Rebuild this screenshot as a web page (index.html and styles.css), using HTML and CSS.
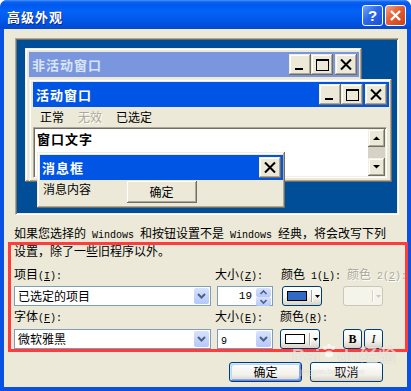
FILE: index.html
```html
<!DOCTYPE html>
<html lang="zh-CN">
<head>
    <meta charset="UTF-8">
    <title>高级外观</title>
    <link rel="stylesheet" href="styles.css">
</head>
<body>
    <div class="window">
        <div class="titlebar">
            <span class="title">高级外观</span>
            <div class="tb-btns">
                <span class="tb-btn help">?</span>
                <span class="tb-btn close">
                    <svg width="19" height="19" viewBox="0 0 19 19"><path d="M5 5 L14 14 M14 5 L5 14" stroke="#fff" stroke-width="2.4" fill="none"/></svg>
                </span>
            </div>
        </div>

        <div class="client">
            <!-- 预览 -->
            <div class="preview">
                <div class="win inactive">
                    <div class="cap">
                        <span class="cap-title">非活动窗口</span>
                        <span class="cbtn"><svg width="22" height="21"><rect x="6" y="14" width="8" height="2"/></svg></span>
                        <span class="cbtn"><svg width="22" height="21"><rect x="5" y="5" width="13" height="2"/><rect x="5.5" y="5.5" width="12" height="11" fill="none" stroke="#000"/></svg></span>
                        <span class="cbtn gap"><svg width="22" height="21"><path d="M6 5.5 L16 15.5 M16 5.5 L6 15.5" stroke="#000" stroke-width="2"/></svg></span>
                    </div>
                </div>

                <div class="win active">
                    <div class="cap">
                        <span class="cap-title">活动窗口</span>
                        <span class="cbtn"><svg width="22" height="21"><rect x="6" y="14" width="8" height="2"/></svg></span>
                        <span class="cbtn"><svg width="22" height="21"><rect x="5" y="5" width="13" height="2"/><rect x="5.5" y="5.5" width="12" height="11" fill="none" stroke="#000"/></svg></span>
                        <span class="cbtn gap"><svg width="22" height="21"><path d="M6 5.5 L16 15.5 M16 5.5 L6 15.5" stroke="#000" stroke-width="2"/></svg></span>
                    </div>
                    <div class="menu">
                        <span>正常</span>
                        <span class="dis">无效</span>
                        <span>已选定</span>
                    </div>
                    <div class="txt">
                        <div class="txt-body">窗口文字</div>
                        <div class="scroll">
                            <span class="sbtn"><svg width="17" height="18"><polygon points="5,11 12,11 8.5,7.5"/></svg></span>
                            <span class="track"></span>
                            <span class="sbtn"><svg width="17" height="18"><polygon points="5,7 12,7 8.5,10.5"/></svg></span>
                        </div>
                    </div>
                </div>

                <div class="win msgbox">
                    <div class="cap">
                        <span class="cap-title">消息框</span>
                        <span class="cbtn"><svg width="22" height="21"><path d="M6 5.5 L16 15.5 M16 5.5 L6 15.5" stroke="#000" stroke-width="2"/></svg></span>
                    </div>
                    <div class="msgbody">
                        <span class="msgtext">消息内容</span>
                        <span class="msgbtn">确定</span>
                    </div>
                </div>
            </div>

            <p class="desc">如果您选择的<span class="en"> Windows </span>和按钮设置不是<span class="en"> Windows </span>经典，将会改写下列<br>设置，除了一些旧程序以外。</p>

            <!-- 项目设置 -->
            <div class="props">
                <span class="lbl">项目<span class="en">(<u>I</u>):</span></span>
                <span class="lbl">大小<span class="en">(<u>Z</u>):</span></span>
                <span class="lbl c3">颜色<span class="en"> 1(<u>L</u>):</span></span>
                <span class="lbl c4 off">颜色<span class="en"> 2(<u>2</u>):</span></span>

                <div class="combo wide">
                    <span class="combo-text">已选定的项目</span>
                    <span class="drop"><svg width="15" height="16"><polyline points="4,6 7.5,9.5 11,6" fill="none" stroke="#4d6185" stroke-width="2"/></svg></span>
                </div>
                <div class="combo small">
                    <span class="combo-text num">19</span>
                    <span class="spinbtns">
                        <span><svg width="15" height="9"><polyline points="4.5,6 7.5,3 10.5,6" fill="none" stroke="#4d6185" stroke-width="1.6"/></svg></span>
                        <span><svg width="15" height="9"><polyline points="4.5,3 7.5,6 10.5,3" fill="none" stroke="#4d6185" stroke-width="1.6"/></svg></span>
                    </span>
                </div>
                <div class="colorpick shift">
                    <span class="swatch"></span>
                    <span class="sep"></span>
                    <svg width="5" height="3"><polygon points="0,0 5,0 2.5,3"/></svg>
                </div>
                <div class="colorpick disabled">
                    <span class="swatch"></span>
                    <span class="sep"></span>
                    <svg width="5" height="3"><polygon points="0,0 5,0 2.5,3" fill="#c9c7ba"/></svg>
                </div>

                <span class="lbl low">字体<span class="en">(<u>F</u>):</span></span>
                <span class="lbl low">大小<span class="en">(<u>E</u>):</span></span>
                <span class="lbl low">颜色<span class="en">(<u>R</u>):</span></span>
                <span></span>

                <div class="combo wide">
                    <span class="combo-text">微软雅黑</span>
                    <span class="drop"><svg width="15" height="16"><polyline points="4,6 7.5,9.5 11,6" fill="none" stroke="#4d6185" stroke-width="2"/></svg></span>
                </div>
                <div class="combo small">
                    <span class="combo-text"><span class="en">9</span></span>
                    <span class="drop"><svg width="15" height="16"><polyline points="4,6 7.5,9.5 11,6" fill="none" stroke="#4d6185" stroke-width="2"/></svg></span>
                </div>
                <div class="colorpick">
                    <span class="swatch white"></span>
                    <span class="sep"></span>
                    <svg width="5" height="3"><polygon points="0,0 5,0 2.5,3"/></svg>
                </div>
                <div class="fmt">
                    <span class="fbtn bold">B</span>
                    <span class="fbtn ital">I</span>
                </div>
            </div>

            <div class="actions">
                <span class="btn default">确定</span>
                <span class="btn">取消</span>
            </div>
        </div>

        <div class="mark"></div>
        <div class="watermark">
            <span class="wm-big">Bai<svg width="16" height="16"><g fill="#fff"><circle cx="4" cy="5" r="2"/><circle cx="8" cy="3" r="2"/><circle cx="12" cy="5" r="2"/><ellipse cx="8" cy="11" rx="4" ry="3.5"/></g></svg>du经验</span>
            <span class="wm-url">jingyan.baidu.com</span>
        </div>
    </div>
</body>
</html>
```

FILE: styles.css
```css
* {box-sizing: border-box;}
body {margin: 0; background: #fff; font-family: "Noto Sans CJK SC", "Liberation Sans", sans-serif; font-size: 12px; color: #000;}
.en {font-family: "Liberation Mono", monospace; font-size: 10px;}
u {text-underline-offset: 1px;}

/* 窗口外框 */
.window {position: relative; width: 411px; height: 391px; padding: 0 4px 4px; background: #0a50e2; border-radius: 7px 7px 0 0; overflow: hidden;}
.titlebar {height: 29px; margin: 0 -4px; padding: 0 5px 0 7px; display: flex; align-items: center; justify-content: space-between;
    background: linear-gradient(#4a93f7 0, #0a60f0 2px, #0058ee 5px, #0363f6 11px, #0058e9 20px, #004fd9 26px, #0a48cc 29px); border-radius: 7px 7px 0 0;}
.title {color: #fff; font-weight: bold; font-size: 13px; letter-spacing: 1px; padding-top: 3px; text-shadow: 1px 1px #0c2591;}
.tb-btns {display: flex; gap: 2px; padding-top: 1px;}
.tb-btn {width: 21px; height: 21px; border: 1px solid #fff; border-radius: 3px; display: flex; align-items: center; justify-content: center;}
.help {background: linear-gradient(135deg, #78a6fa, #2c68ea 45%, #1b4fd6); color: #fff; font: bold 15px "Liberation Sans", sans-serif;}
.close {background: linear-gradient(135deg, #f4a283, #e35f33 45%, #c7411b);}

.client {height: 358px; padding-top: 9px; background: #ece9d8;}

/* 预览区域 */
.preview {position: relative; margin-left: 11px; width: 384px; height: 177px; background: #004e98;
    border: 1px solid; border-color: #aca899 #fff #fff #aca899; box-shadow: inset 1px 1px #716f64, inset -1px -1px #f1efe2;}
.win {position: absolute; overflow: hidden; background: #ece9d8;
    box-shadow: inset -1px -1px #716f64, inset 1px 1px #f1efe2, inset -2px -2px #aca899, inset 2px 2px #fff;}
.inactive {left: 9px; top: 9px; width: 337px; height: 134px; padding: 4px 3px 0 4px;}
.active {left: 13px; top: 40px; width: 363px; height: 103px; padding: 3px 3px 0 4px;}
.msgbox {left: 21px; top: 113px; width: 248px; height: 56px; padding: 3px 2px 0 3px;}

.cap {height: 25px; display: flex; align-items: center; padding: 0 2px 0 3px; background: #0055e5; color: #fff; font-weight: bold; font-size: 13px; letter-spacing: 1px;}
.inactive .cap {background: #7a96df; color: #d8e4f8;}
.msgbox .cap {padding-left: 2px;}
.cap-title {flex: 1; line-height: 16px;}
.cbtn {display: block; width: 22px; height: 21px; background: #ece9d8;
    box-shadow: inset -1px -1px #716f64, inset 1px 1px #f1efe2, inset -2px -2px #aca899, inset 2px 2px #fff;}
.cbtn svg {display: block;}
.cbtn.gap {margin-left: 2px;}

.menu {height: 20px; display: flex; align-items: center; gap: 14px; padding-left: 7px; line-height: 20px;}
.menu .dis {color: #aca899; text-shadow: 1px 1px #fff;}

.txt {width: 354px; height: 51px; display: flex; padding: 1px; background: #fff;
    border: 1px solid; border-color: #aca899 #fff #fff #aca899; box-shadow: inset 1px 1px #716f64, inset -1px -1px #f1efe2;}
.txt-body {flex: 1; padding: 1px 0 0 2px; font-weight: bold; font-size: 13px; letter-spacing: 1px; line-height: 17px;}
.scroll {width: 17px; display: flex; flex-direction: column;}
.sbtn {display: block; height: 18px; background: #ece9d8;
    box-shadow: inset -1px -1px #716f64, inset 1px 1px #f1efe2, inset -2px -2px #aca899, inset 2px 2px #fff;}
.sbtn svg {display: block;}
.track {flex: 1; background: #d6d2c6;}

.msgbody {display: grid; grid-template-columns: 1fr 70px 1fr; height: 28px;}
.msgtext {padding-left: 3px; line-height: 18px;}
.msgbtn {height: 22px; margin-top: 1px; text-align: center; line-height: 22px; background: #ece9d8;
    box-shadow: inset -1px -1px #716f64, inset 1px 1px #fff, inset -2px -2px #aca899;}

/* 说明文字 */
.desc {margin: 10px 0 0 10px; line-height: 15px;}

/* 项目设置 */
.props {display: grid; grid-template-columns: 201px 65px 63px 40px; grid-template-rows: 19px 20px 23px 20px; margin: 9px 0 0 10px;}
.lbl {line-height: 14px; white-space: nowrap;}
.lbl.c3 {margin-left: 1px;}
.lbl.c4 {margin-left: 4px;}
.lbl.off {color: #aca899; text-shadow: 1px 1px #fff;}
.lbl.low {align-self: end; margin-bottom: 3px;}

.combo {display: flex; height: 20px; border: 1px solid #7f9db9; background: #fff;}
.combo.wide {width: 197px;}
.combo.small {width: 56px; margin-left: 2px;}
.combo-text {flex: 1; padding-left: 3px; line-height: 18px; white-space: nowrap;}
.combo-text.num {text-align: right; padding-right: 3px; font-family: "Liberation Mono", monospace; font-size: 11px;}
.drop {width: 15px; margin: 1px; border-radius: 2px; background: linear-gradient(#d7e2fd, #b4c8f9); display: flex; align-items: center; justify-content: center;}
.spinbtns {width: 15px; margin: 1px; display: flex; flex-direction: column; gap: 0;}
.spinbtns span {flex: 1; border-radius: 2px; background: linear-gradient(#d7e2fd, #b4c8f9); display: flex; align-items: center;}

.colorpick {display: flex; align-items: center; width: 40px; height: 20px; padding-left: 4px; border: 1px solid #003c74; border-radius: 3px;
    background: linear-gradient(#fff, #f3f2ec 60%, #d8d2c6);}
.colorpick.shift {margin-left: 2px;}
.swatch {width: 20px; height: 10px; border: 1px solid #000; background: #316ac5;}
.swatch.white {background: #fff;}
.sep {width: 1px; height: 12px; margin: 0 3px 0 4px; background: #aca899; box-shadow: 1px 0 #fff;}
.colorpick.disabled {border-color: #c9c7ba; background: #f5f4ea;}
.colorpick.disabled .swatch {visibility: hidden;}
.colorpick.disabled .sep {background: #d6d3c6;}

.fmt {display: flex; gap: 2px;}
.fbtn {width: 19px; height: 20px; display: flex; align-items: center; justify-content: center; border: 1px solid #003c74; border-radius: 3px;
    background: linear-gradient(#fff, #f3f2ec 60%, #d8d2c6); font-family: "Liberation Serif", serif; font-size: 12px;}
.fbtn.bold {font-weight: bold;}
.fbtn.ital {font-style: italic;}

/* 确定 / 取消 */
.actions {display: flex; justify-content: flex-end; gap: 8px; margin-top: 13px; padding-right: 24px;}
.btn {width: 73px; height: 20px; text-align: center; line-height: 18px; border: 1px solid #003c74; border-radius: 3px;
    background: linear-gradient(#fff, #f2f1eb 65%, #d8d2c6);}
.btn.default {box-shadow: inset 1px 1px #cee7ff, inset -1px -1px #6982ee, inset 2px 2px #bcd4f6, inset -2px -2px #89ade4;}

/* 红色标注框和水印 */
.mark {position: absolute; left: 8px; top: 242px; width: 400px; height: 110px; border: 3px solid #ff3b3b; pointer-events: none;}
.watermark {position: absolute; left: 292px; top: 345px; display: flex; flex-direction: column; align-items: flex-start; color: rgba(255,255,255,.6);
    text-shadow: 0 0 1px rgba(90,80,60,.25); pointer-events: none;}
.wm-big {font: bold 18px "Liberation Sans", "Noto Sans CJK SC", sans-serif; line-height: 22px; display: flex; align-items: center;}
.wm-big svg {opacity: .7; margin: -10px 1px 0;}
.wm-url {font: 8px "Liberation Sans", sans-serif; margin-left: 8px; line-height: 10px;}
```
